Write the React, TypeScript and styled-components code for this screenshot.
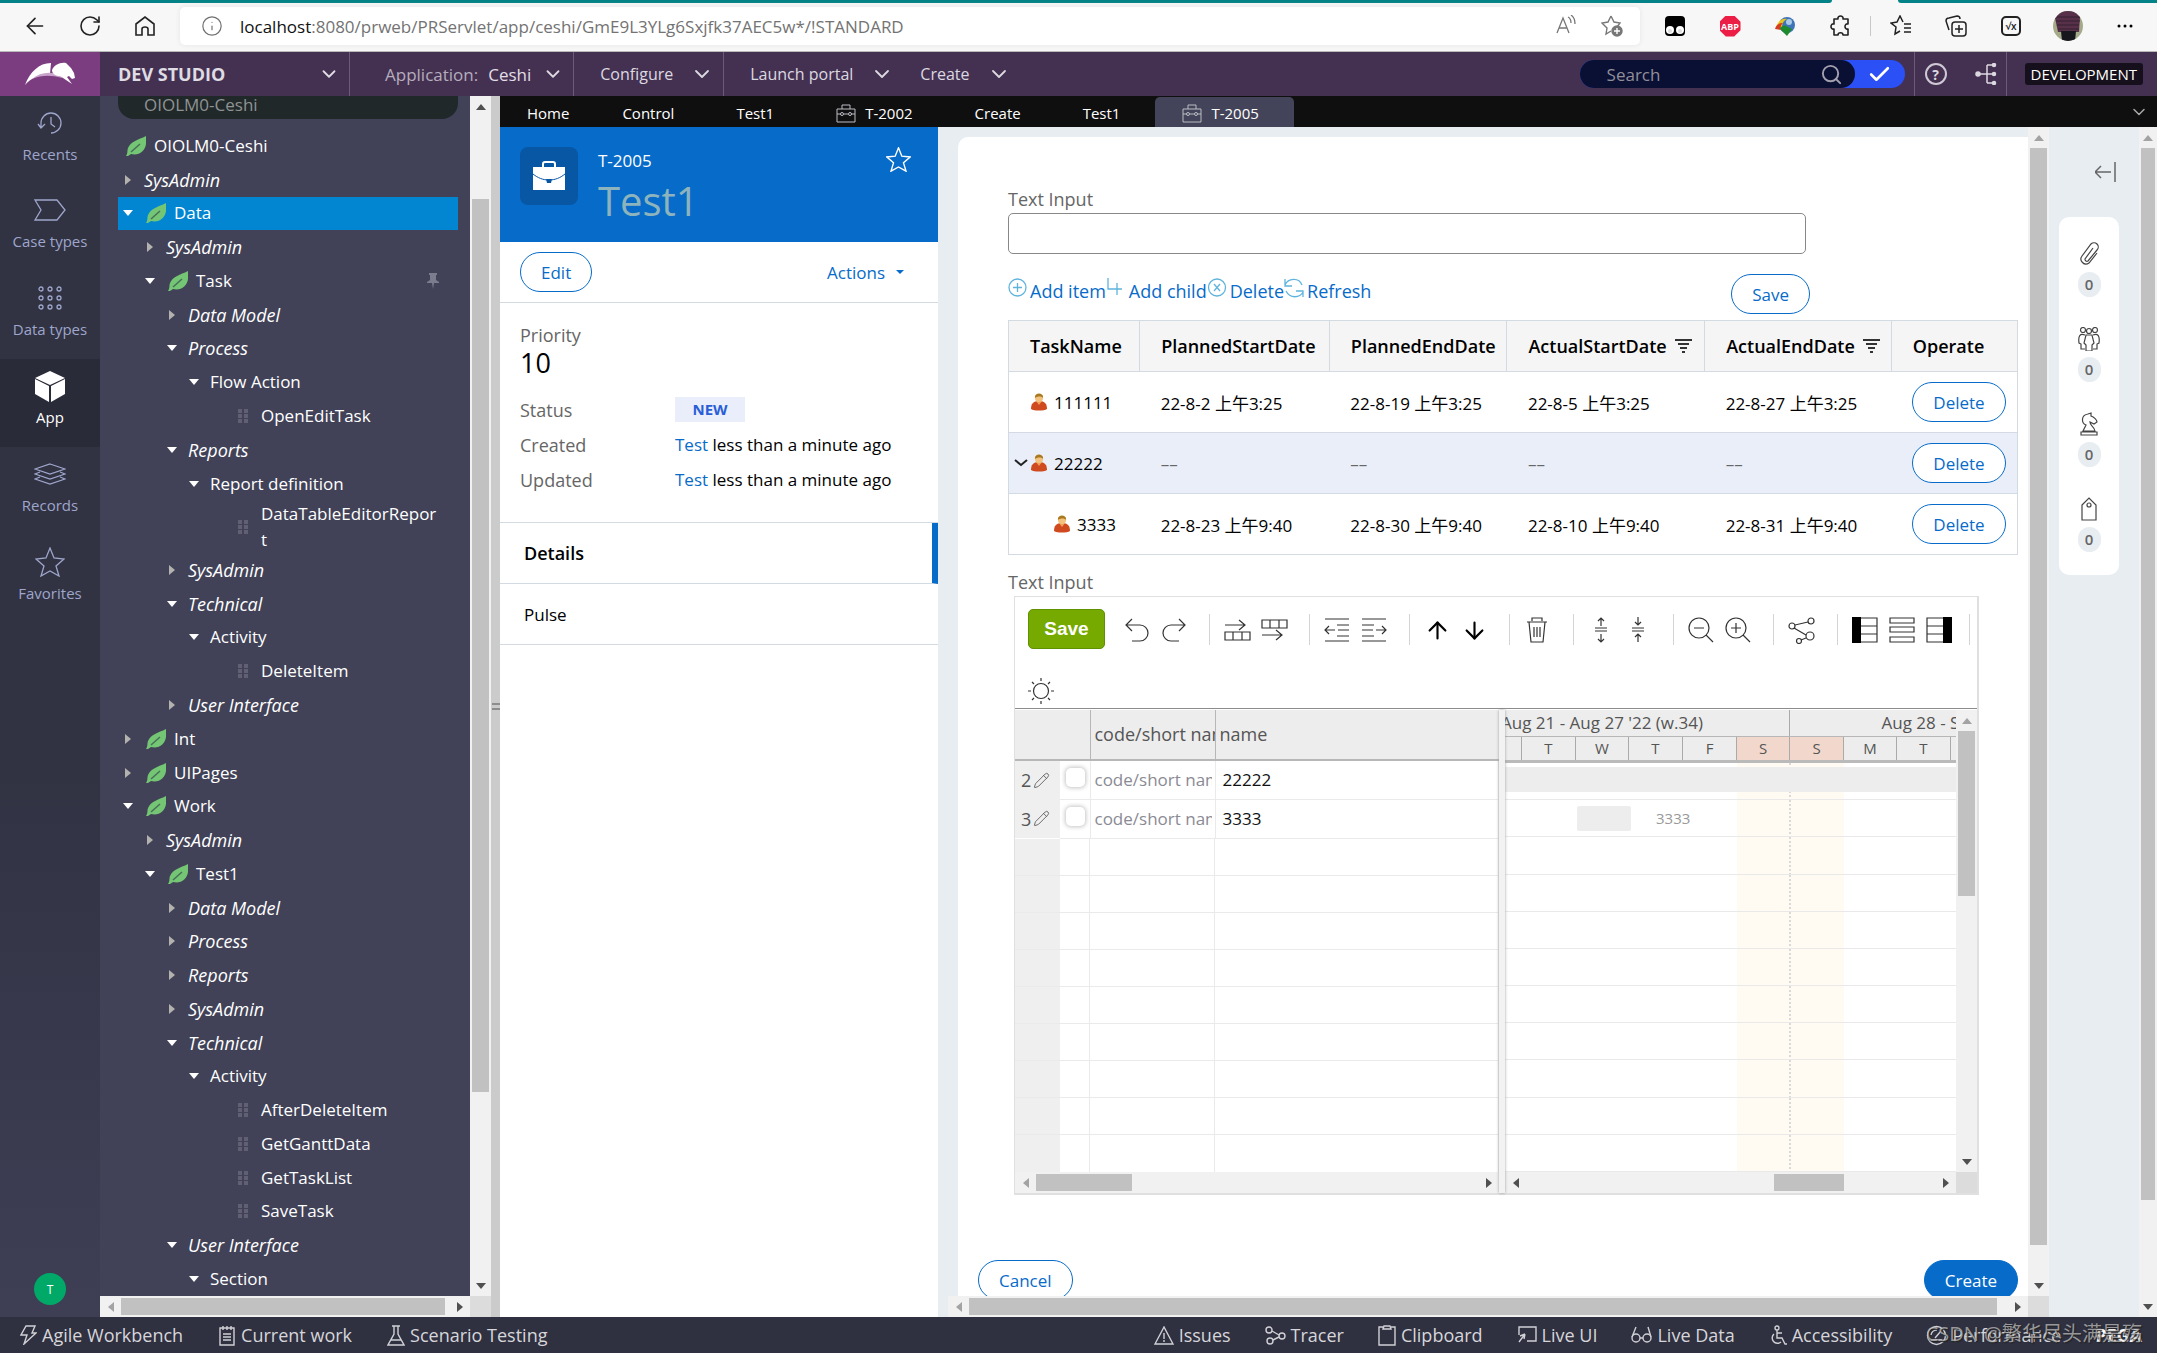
import React from 'react';
import styled, { createGlobalStyle, css } from 'styled-components';
import {
  ArrowLeft, RotateCw, Info, ChevronDown, Search, Check, Pencil, ArrowUp, ArrowDown,
} from 'lucide-react';

const sans = '"Open Sans", "Noto Sans", "Noto Sans CJK SC", sans-serif';

const Global = createGlobalStyle`
  * { box-sizing: border-box; }
  html, body { margin: 0; height: 100%; }
  #root { height: 100%; }
  body { font-family: ${sans}; font-size: 17px; color: #000; overflow: hidden; }
  button, input { font-family: inherit; }
  button { cursor: pointer; padding: 0; border: 0; background: none; color: inherit; font-size: inherit; }
  a { text-decoration: none; color: inherit; }
  svg { display: block; flex: none; }
`;

const Page = styled.div`
  display: flex;
  flex-direction: column;
  height: 100vh;
  overflow: hidden;
`;

/* ---------- scroll bars ---------- */

const BarShell = styled.div<{ $vertical?: boolean; $size: number }>`
  display: flex;
  flex: none;
  flex-direction: ${(p) => (p.$vertical ? 'column' : 'row')};
  ${(p) => (p.$vertical ? `width: ${p.$size}px; padding: 0 2px;` : `height: ${p.$size}px; padding: 2px 0;`)}
  background: #f1f1f1;
`;
const BarEnd = styled.div`
  flex: none;
  width: 21px;
  height: 100%;
  display: flex;
  align-items: center;
  justify-content: center;
  &[data-vertical='true'] { width: 100%; height: 21px; }
`;
const BarSpace = styled.div<{ $grow: number }>`
  flex: ${(p) => p.$grow} 1 0;
`;
const BarThumb = styled(BarSpace)`
  background: #c1c1c1;
`;
const arrowShape = {
  up: '5,0 10,6 0,6',
  down: '0,0 10,0 5,6',
  left: '6,0 6,10 0,5',
  right: '0,0 6,5 0,10',
};
function Arrow({ dir, color = '#505050' }: { dir: keyof typeof arrowShape; color?: string }) {
  const flat = dir === 'up' || dir === 'down';
  return (
    <svg width={flat ? 10 : 6} height={flat ? 6 : 10}>
      <polygon points={arrowShape[dir]} fill={color} />
    </svg>
  );
}
type BarProps = { vertical?: boolean; size?: number; before: number; thumb: number; after: number; startColor?: string };
function ScrollBar({ vertical, size = 21, before, thumb, after, startColor }: BarProps) {
  return (
    <BarShell $vertical={vertical} $size={size} aria-hidden="true">
      <BarEnd data-vertical={!!vertical}><Arrow dir={vertical ? 'up' : 'left'} color={startColor} /></BarEnd>
      <BarSpace $grow={before} />
      <BarThumb $grow={thumb} />
      <BarSpace $grow={after} />
      <BarEnd data-vertical={!!vertical}><Arrow dir={vertical ? 'down' : 'right'} /></BarEnd>
    </BarShell>
  );
}
const BarCorner = styled.div`
  flex: none;
  width: 21px;
  height: 21px;
  background: #dcdcdc;
`;
const BarLine = styled.div`
  display: flex;
  flex: none;
  & > :first-child { flex: 1; }
`;

/* ---------- browser chrome ---------- */

const TabStrip = styled.div`
  flex: none;
  display: flex;
  height: 3px;
  background: #f7f7f7;
`;
const TabStripPart = styled.div<{ $grow: number }>`
  flex: ${(p) => p.$grow} 1 0;
  background: #038387;
  &:first-child { border-bottom-right-radius: 3px; }
  &:last-child { border-bottom-left-radius: 3px; }
`;
const TabStripGap = styled.div`
  width: 66px;
`;
const BrowserBar = styled.div`
  flex: none;
  display: flex;
  align-items: center;
  gap: 20px;
  height: 49px;
  padding: 0 17px 2px 20px;
  background: #f7f7f7;
  border-bottom: 1px solid #b9b9b9;
  color: #222;
`;
const IconSet = styled.div`
  display: flex;
  align-items: center;
  gap: 25px;
`;
const ChromeButton = styled.button`
  display: flex;
  align-items: center;
  justify-content: center;
  width: 30px;
  height: 30px;
`;
const ProfileButton = styled(ChromeButton)`
  margin: 0 2px;
`;
const ChromeDivider = styled.div`
  width: 1px;
  height: 20px;
  margin: 0 -10px;
  background: #c8c8c8;
`;
const AddressBar = styled.div`
  flex: 1;
  display: flex;
  align-items: center;
  gap: 17px;
  height: 38px;
  padding: 0 17px 0 21px;
  border-radius: 5px;
  background: #fff;
  box-shadow: 0 0 5px #e4e4e4;
  color: #707070;
`;
const Url = styled.div`
  flex: 1;
  font-size: 17px;
  color: #737373;
  & > b { font-weight: 400; color: #111; }
`;
const AddressTools = styled.div`
  display: flex;
  gap: 25px;
`;
const AdBlock = styled.span`
  display: flex;
  align-items: center;
  justify-content: center;
  width: 21px;
  height: 21px;
  background: #ed1e45;
  clip-path: polygon(30% 0, 70% 0, 100% 30%, 100% 70%, 70% 100%, 30% 100%, 0 70%, 0 30%);
  color: #fff;
  font-size: 9px;
  font-weight: 700;
`;
const MathBox = styled.span`
  display: flex;
  align-items: center;
  justify-content: center;
  width: 20px;
  height: 20px;
  border: 2px solid #222;
  border-radius: 5px;
  font-size: 10px;
  font-weight: 600;
`;

function BrowserChrome() {
  return (
    <>
      <TabStrip>
        <TabStripPart $grow={1832} />
        <TabStripGap />
        <TabStripPart $grow={259} />
      </TabStrip>
      <BrowserBar>
        <IconSet>
          <ChromeButton aria-label="Back"><ArrowLeft size={26} strokeWidth={1.5} /></ChromeButton>
          <ChromeButton aria-label="Reload"><RotateCw size={24} strokeWidth={1.6} /></ChromeButton>
          <ChromeButton aria-label="Home page">
            <svg width="20" height="20" viewBox="0 0 20 20" fill="none" stroke="#222" strokeWidth="1.6">
              <path d="M1 8 10 1l9 7v11h-6v-6c0-1-1-2-3-2s-3 1-3 2v6H1z" />
            </svg>
          </ChromeButton>
        </IconSet>
        <AddressBar>
          <Info size={22} strokeWidth={1.3} />
          <Url><b>localhost</b>:8080/prweb/PRServlet/app/ceshi/GmE9L3YLg6Sxjfk37AEC5w*/!STANDARD</Url>
          <AddressTools>
            <svg width="20" height="20" viewBox="0 0 20 20" fill="none" stroke="#777" strokeWidth="1.3">
              <path d="M1 18 7 3l6 15M3 13h8M12 2c2 1 3 3 3 6M15 0c3 2 4 5 4 9" />
            </svg>
            <svg width="22" height="22" viewBox="0 0 22 22" fill="none" stroke="#777" strokeWidth="1.4">
              <path d="m10 1 3 6 6 1-3 4M10 1 7 7 1 8l5 5-1 6 5-3" />
              <circle cx="16" cy="16" r="5" fill="#777" />
              <path d="M16 13v6M13 16h6" stroke="#fff" />
            </svg>
          </AddressTools>
        </AddressBar>
        <IconSet>
          <ChromeButton aria-label="Tampermonkey">
            <svg width="20" height="20" viewBox="0 0 20 20">
              <rect width="20" height="20" rx="4" fill="#000" />
              <circle cx="5" cy="14" r="4" fill="#fff" /><circle cx="15" cy="14" r="4" fill="#fff" />
              <circle cx="5" cy="15" r="2" fill="#ddd" /><circle cx="15" cy="15" r="2" fill="#ddd" />
            </svg>
          </ChromeButton>
          <ChromeButton aria-label="Adblock"><AdBlock>ABP</AdBlock></ChromeButton>
          <ChromeButton aria-label="Download manager">
            <svg width="21" height="21" viewBox="0 0 21 21">
              <circle cx="12" cy="9" r="8" fill="#3f74b8" />
              <circle cx="14" cy="6" r="3" fill="#a9cbe8" />
              <path d="M1 11C3 5 7 2 12 3c-4 2-5 5-5 9z" fill="#e8c31c" />
              <path d="M0 13c1-4 4-6 8-6-2 2-3 4-2 7z" fill="#d33b22" />
              <path d="M5 12c2-2 4-3 6-2l6 3-5 7-5-5z" fill="#1e8a2e" />
            </svg>
          </ChromeButton>
          <ChromeButton aria-label="Extensions">
            <svg width="20" height="22" viewBox="0 0 20 22" fill="none" stroke="#222" strokeWidth="1.6">
              <path d="M4 4h4c-1-4 6-4 5 0h5v5c-4-1-4 6 0 5v6h-5c0-3-5-3-5 0H4v-6c-4 1-4-6 0-5z" strokeLinejoin="round" />
            </svg>
          </ChromeButton>
          <ChromeDivider />
          <ChromeButton aria-label="Favorites bar">
            <svg width="22" height="22" viewBox="0 0 22 22" fill="none" stroke="#222" strokeWidth="1.5">
              <path d="m13 7-3-6-3 6-6 1 5 4-1 7 5-3M14 9h7M14 13h7M14 17h7" />
            </svg>
          </ChromeButton>
          <ChromeButton aria-label="Collections">
            <svg width="22" height="22" viewBox="0 0 22 22" fill="none" stroke="#222" strokeWidth="1.5">
              <rect x="7" y="7" width="14" height="14" rx="3" />
              <path d="M14 10v8M10 14h8M4 15 1 6c0-2 1-3 3-3l8-2c2 0 3 1 3 3" />
            </svg>
          </ChromeButton>
          <ChromeButton aria-label="Math solver"><MathBox>√x</MathBox></ChromeButton>
          <ProfileButton aria-label="Profile">
            <svg width="30" height="30" viewBox="0 0 30 30">
              <clipPath id="face"><circle cx="15" cy="15" r="15" /></clipPath>
              <g clipPath="url(#face)">
                <rect width="30" height="30" fill="#a5aa8a" />
                <path d="M8 0h14l5 6-1 15H5L2 7z" fill="#58304a" />
                <path d="M4 6h23M3 10h24M4 14h22M5 18h21" stroke="#34202f" />
                <path d="M8 20h15l-1 10H9z" fill="#17161c" />
              </g>
            </svg>
          </ProfileButton>
          <ChromeButton aria-label="More">
            <svg width="16" height="4"><circle cx="2" cy="2" r="1.5" /><circle cx="8" cy="2" r="1.5" /><circle cx="14" cy="2" r="1.5" /></svg>
          </ChromeButton>
        </IconSet>
      </BrowserBar>
    </>
  );
}

/* ---------- studio header ---------- */

const Header = styled.header`
  flex: none;
  display: flex;
  height: 44px;
  background: #443152;
  color: #dcd8e0;
  font-size: 16px;
`;
const Logo = styled.a`
  width: 100px;
  display: flex;
  align-items: center;
  justify-content: center;
  background: #7c3c80;
`;
const Menu = styled.button<{ $gap: number; $pad: string; $rule?: boolean }>`
  display: flex;
  align-items: center;
  gap: ${(p) => p.$gap}px;
  padding: ${(p) => p.$pad};
  ${(p) => p.$rule && 'border-right: 1px solid #6b5a79;'}
`;
const StudioMenu = styled(Menu)`
  width: 250px;
  justify-content: space-between;
  font-weight: 700;
  font-size: 18px;
  color: #dfdce3;
`;
const MenuLabel = styled.span`
  font-size: 17px;
  color: #b5adbd;
  & > b { margin-left: 10px; font-size: 17px; font-weight: 400; color: #e2dfe6; }
`;
const HeaderRight = styled.div`
  margin-left: auto;
  display: flex;
  align-items: center;
`;
const SearchPill = styled.form`
  display: flex;
  width: 325px;
  height: 28px;
  margin-right: 9px;
  border-radius: 14px;
  background: #2b50f5;
`;
const SearchField = styled.label`
  display: flex;
  align-items: center;
  width: 275px;
  padding: 0 12px 0 27px;
  border-radius: 14px;
  background: #0a1033;
  color: #a39fae;
`;
const SearchInput = styled.input`
  flex: 1;
  min-width: 0;
  padding: 0;
  border: 0;
  outline: 0;
  background: none;
  color: #fff;
  font-size: 17px;
  &::placeholder { color: #918f9b; opacity: 1; }
`;
const SearchGo = styled.button`
  flex: 1;
  display: flex;
  align-items: center;
  justify-content: center;
  color: #fff;
`;
const HeaderTools = styled.div`
  display: flex;
  align-items: center;
  gap: 28px;
  height: 44px;
  padding: 0 9px 0 10px;
  border: solid #6b5a79;
  border-width: 0 1px;
`;
const EnvBadge = styled.span`
  margin: 0 14px 0 18px;
  padding: 0 6px;
  border-radius: 3px;
  background: #15101b;
  color: #fff;
  font-size: 15px;
  line-height: 22px;
`;
const HelpMark = styled.button`
  width: 22px;
  height: 22px;
  border: 2px solid #cfc9d5;
  border-radius: 50%;
  font-size: 14px;
  font-weight: 700;
  line-height: 17px;
`;

function StudioHeader() {
  return (
    <Header>
      <Logo href="#home" aria-label="Pega">
        <svg width="52" height="24" viewBox="0 0 52 24">
          <path d="M1 23C6 10 15 1 27 1l-1 11C16 12 7 16 1 23z" fill="#fff" />
          <path d="M8 17c8-7 18-8 29-4l1 3c-11-3-20-3-30 1z" fill="#c9a3cb" />
          <path d="M28 8c2-5 8-8 14-7l5 5 3 5 1 5-3 1-3-3-2 1 5 7-6-4-6-4c-4 0-8-2-8-6z" fill="#fff" />
        </svg>
      </Logo>
      <StudioMenu $gap={10} $pad="0 9px 0 18px" $rule>DEV STUDIO<ChevronDown size={22} strokeWidth={2} /></StudioMenu>
      <Menu $gap={11} $pad="0 9px 0 35px" $rule>
        <MenuLabel>Application:<b>Ceshi</b></MenuLabel><ChevronDown size={22} />
      </Menu>
      <Menu $gap={17} $pad="0 9px 0 26px" $rule>Configure<ChevronDown size={24} strokeWidth={1.8} /></Menu>
      <Menu $gap={17} $pad="0 0 0 26px">Launch portal<ChevronDown size={24} strokeWidth={1.8} /></Menu>
      <Menu $gap={17} $pad="0 0 0 26px">Create<ChevronDown size={24} strokeWidth={1.8} /></Menu>
      <HeaderRight>
        <SearchPill>
          <SearchField>
            <SearchInput placeholder="Search" aria-label="Search" />
            <Search size={23} />
          </SearchField>
          <SearchGo type="button" aria-label="Run search"><Check size={25} strokeWidth={2.5} /></SearchGo>
        </SearchPill>
        <HeaderTools>
          <HelpMark>?</HelpMark>
          <svg width="22" height="22" viewBox="0 0 22 22" fill="#dcd8e0" stroke="#dcd8e0" strokeWidth="1.5">
            <path d="M3 11h16M12 2h7M12 20h7M12 2v18" fill="none" />
            <circle cx="3" cy="11" r="2" /><circle cx="19" cy="2" r="1.5" /><circle cx="19" cy="11" r="1.5" /><circle cx="19" cy="20" r="1.5" />
          </svg>
        </HeaderTools>
        <EnvBadge>DEVELOPMENT</EnvBadge>
      </HeaderRight>
    </Header>
  );
}

/* ---------- left rail ---------- */

const Body = styled.div`
  flex: 1;
  min-height: 0;
  display: flex;
`;
const Rail = styled.nav`
  flex: none;
  display: flex;
  flex-direction: column;
  width: 100px;
  background: linear-gradient(#313242 55%, #3e3f55);
`;
const RailItem = styled.a<{ $active?: boolean }>`
  display: flex;
  flex-direction: column;
  align-items: center;
  gap: 4px;
  height: 88px;
  padding-top: 10px;
  color: ${(p) => (p.$active ? '#fff' : '#9ea6cb')};
  font-size: 15px;
  line-height: 22px;
  ${(p) => p.$active && 'background: #2a2b38;'}
  &:first-child { height: 87px; }
`;
const RailIcon = styled.span`
  display: flex;
  align-items: center;
  height: 33px;
`;
const Avatar = styled.button`
  width: 32px;
  height: 32px;
  margin: auto auto 12px;
  border-radius: 50%;
  background: #00a968;
  color: #fff;
  font-size: 12px;
`;

const railStroke = { fill: 'none', stroke: '#9ea6cb', strokeWidth: 1.3 };
const railItems = [
  {
    label: 'Recents',
    icon: (
      <svg width="26" height="22" viewBox="0 0 26 22" {...railStroke}>
        <path d="M4 15V11a10 10 0 1 1 10 10M1 12l3 4 4-4M14 5v7l4 3" />
      </svg>
    ),
  },
  {
    label: 'Case types',
    icon: <svg width="32" height="22" viewBox="0 0 32 22" {...railStroke}><path d="M1 1h22l8 10-8 10H1l6-10z" /></svg>,
  },
  {
    label: 'Data types',
    icon: (
      <svg width="24" height="24" viewBox="0 0 24 24" {...railStroke}>
        {[3, 12, 21].map((y) => [3, 12, 21].map((x) => <circle key={`${x}-${y}`} cx={x} cy={y} r="2" />))}
      </svg>
    ),
  },
  {
    label: 'App',
    active: true,
    icon: (
      <svg width="32" height="32" viewBox="0 0 32 32">
        <path d="M16 1 31 8 16 15 1 8zM1 9l14 7v16L1 24zM31 9l-14 7v16l14-8z" fill="#fff" />
      </svg>
    ),
  },
  {
    label: 'Records',
    icon: (
      <svg width="32" height="22" viewBox="0 0 32 22" {...railStroke}>
        <path d="M16 1 31 6l-15 5L1 6zM6 9l-5 2 15 5 15-5-5-2M6 14l-5 2 15 5 15-5-5-2" />
      </svg>
    ),
  },
  {
    label: 'Favorites',
    icon: (
      <svg width="30" height="30" viewBox="0 0 30 30" {...railStroke}>
        <path d="m15 1 4 10 10 1-8 7 3 10-9-5-9 5 3-10-8-7 10-1z" />
      </svg>
    ),
  },
];

function LeftRail() {
  return (
    <Rail>
      {railItems.map((r) => (
        <RailItem key={r.label} href="#rail" $active={r.active}>
          <RailIcon>{r.icon}</RailIcon>
          {r.label}
        </RailItem>
      ))}
      <Avatar>T</Avatar>
    </Rail>
  );
}

/* ---------- app explorer tree ---------- */

const Explorer = styled.div`
  flex: none;
  display: flex;
  flex-direction: column;
  width: 391px;
`;
const ExplorerMain = styled.div`
  flex: 1;
  min-height: 0;
  display: flex;
`;
const TreePane = styled.div`
  flex: 1;
  display: flex;
  flex-direction: column;
  gap: 10px;
  min-height: 0;
  padding: 0 12px 0 18px;
  background: #414257;
  color: #fff;
  overflow: hidden;
`;
const TreeSearch = styled.input`
  flex: none;
  height: 23px;
  padding: 0 26px 6px;
  border: 0;
  border-radius: 0 0 16px 16px;
  background: #212829;
  color: #8f9393;
  font-size: 17px;
`;
const Tree = styled.ul`
  flex: 1;
  min-height: 0;
  display: flex;
  flex-direction: column;
  margin: 0;
  padding: 0;
  list-style: none;
`;
const TreeRow = styled.li<{ $pad: number; $selected?: boolean; $italic?: boolean; $tall?: boolean }>`
  flex: 0 1 ${(p) => (p.$tall ? 53 : 34)}px;
  min-height: 0;
  display: flex;
  align-items: center;
  padding-left: ${(p) => p.$pad}px;
  font-size: ${(p) => (p.$italic ? 18 : 17)}px;
  line-height: 26px;
  ${(p) => p.$italic && 'font-style: italic;'}
  ${(p) => p.$selected && 'background: #0286d2;'}
`;
const Twisty = styled.span`
  flex: none;
  display: flex;
  justify-content: center;
  width: 20px;
  margin-right: 6px;
`;
const LeafMark = styled.svg`
  margin: 0 8px 0 2px;
`;
const Grip = styled.svg`
  margin-right: 13px;
`;
const NodeName = styled.span`
  word-break: break-all;
  flex: 1;
  padding-right: 18px;
`;
const Pin = styled.svg`
  margin-right: 19px;
`;
const Splitter = styled.div`
  flex: none;
  display: flex;
  align-items: center;
  justify-content: center;
  width: 9px;
  background: #cbcbcb;
`;

type Node = { t: string; lv: number; k?: 'o' | 'c' | 'i'; leaf?: boolean; it?: boolean; sel?: boolean; tall?: boolean; pin?: boolean; root?: boolean };
const nodes: Node[] = [
  { t: 'OIOLM0-Ceshi', lv: 0, root: true, leaf: true },
  { t: 'SysAdmin', lv: 0, k: 'c', it: true },
  { t: 'Data', lv: 0, k: 'o', leaf: true, sel: true },
  { t: 'SysAdmin', lv: 1, k: 'c', it: true },
  { t: 'Task', lv: 1, k: 'o', leaf: true, pin: true },
  { t: 'Data Model', lv: 2, k: 'c', it: true },
  { t: 'Process', lv: 2, k: 'o', it: true },
  { t: 'Flow Action', lv: 3, k: 'o' },
  { t: 'OpenEditTask', lv: 4, k: 'i' },
  { t: 'Reports', lv: 2, k: 'o', it: true },
  { t: 'Report definition', lv: 3, k: 'o' },
  { t: 'DataTableEditorReport', lv: 4, k: 'i', tall: true },
  { t: 'SysAdmin', lv: 2, k: 'c', it: true },
  { t: 'Technical', lv: 2, k: 'o', it: true },
  { t: 'Activity', lv: 3, k: 'o' },
  { t: 'DeleteItem', lv: 4, k: 'i' },
  { t: 'User Interface', lv: 2, k: 'c', it: true },
  { t: 'Int', lv: 0, k: 'c', leaf: true },
  { t: 'UIPages', lv: 0, k: 'c', leaf: true },
  { t: 'Work', lv: 0, k: 'o', leaf: true },
  { t: 'SysAdmin', lv: 1, k: 'c', it: true },
  { t: 'Test1', lv: 1, k: 'o', leaf: true },
  { t: 'Data Model', lv: 2, k: 'c', it: true },
  { t: 'Process', lv: 2, k: 'c', it: true },
  { t: 'Reports', lv: 2, k: 'c', it: true },
  { t: 'SysAdmin', lv: 2, k: 'c', it: true },
  { t: 'Technical', lv: 2, k: 'o', it: true },
  { t: 'Activity', lv: 3, k: 'o' },
  { t: 'AfterDeleteItem', lv: 4, k: 'i' },
  { t: 'GetGanttData', lv: 4, k: 'i' },
  { t: 'GetTaskList', lv: 4, k: 'i' },
  { t: 'SaveTask', lv: 4, k: 'i' },
  { t: 'User Interface', lv: 2, k: 'o', it: true },
  { t: 'Section', lv: 3, k: 'o' },
];
const padOf = (n: Node) => (n.root ? 6 : n.k === 'i' ? 120 : n.lv * 22);

function ExplorerTree() {
  return (
    <Explorer>
      <ExplorerMain>
        <TreePane>
          <TreeSearch defaultValue="OIOLM0-Ceshi" aria-label="Application class" />
          <Tree>
            {nodes.map((n, i) => (
              <TreeRow key={i} $pad={padOf(n)} $selected={n.sel} $italic={n.it} $tall={n.tall}>
                {n.k === 'o' && <Twisty><Arrow dir="down" color="#fff" /></Twisty>}
                {n.k === 'c' && <Twisty><Arrow dir="right" color="#b3b2af" /></Twisty>}
                {n.k === 'i' && (
                  <Grip width="10" height="14">
                    {[0, 5, 10].map((y) => [0, 6].map((x) => <rect key={`${x}-${y}`} x={x} y={y} width="4" height="4" fill="#606072" />))}
                  </Grip>
                )}
                {n.leaf && (
                  <LeafMark width="20" height="20" viewBox="0 0 20 20">
                    <path d="M20 0v8c-1 7-7 12-15 10l-3 2H0c2-3 1-5 2-8C5 5 12 4 20 0z" fill="#74c674" />
                    <path d="M5 16 14 8" stroke="#46705a" strokeWidth="1.5" />
                  </LeafMark>
                )}
                <NodeName>{n.t}</NodeName>
                {n.pin && (
                  <Pin width="12" height="16" viewBox="0 0 12 16">
                    <path d="M2 0h8v2H9v5l3 2v1H0V9l3-2V2H2zM5 10h2l-1 6z" fill="#7b7c8e" />
                  </Pin>
                )}
              </TreeRow>
            ))}
          </Tree>
        </TreePane>
        <ScrollBar vertical before={82} thumb={894} after={183} />
      </ExplorerMain>
      <BarLine>
        <ScrollBar before={0} thumb={324} after={4} startColor="#a3a3a3" />
        <BarCorner />
      </BarLine>
    </Explorer>
  );
}

/* ---------- workspace tabs ---------- */

const Workspace = styled.div`
  flex: 1;
  min-width: 0;
  display: flex;
  flex-direction: column;
`;
const Tabs = styled.div`
  flex: none;
  display: flex;
  height: 31px;
  padding-top: 1px;
  background: #0f0f10;
  color: #fff;
`;
const Tab = styled.button<{ $active?: boolean; $short?: boolean }>`
  display: flex;
  align-items: center;
  gap: 8px;
  padding: 2px ${(p) => (p.$short ? 26 : 35)}px 0 27px;
  border-radius: 5px 5px 0 0;
  font-size: 15px;
  ${(p) => p.$active && 'background: #434459;'}
`;
const TabsMenu = styled.button`
  margin-left: auto;
  padding: 0 8px;
  color: #a9a9a9;
`;
function CaseIcon() {
  return (
    <svg width="21" height="19" viewBox="0 0 21 19" fill="none" stroke="#bcbcc4" strokeWidth="1">
      <path d="M1 5h18v13H1zM6 5V1h8v4M1 10h4M8 10h4M15 10h4" />
      <circle cx="6" cy="10" r="1.5" /><circle cx="14" cy="10" r="1.5" />
    </svg>
  );
}
const tabItems = [
  { t: 'Home', short: true }, { t: 'Control' }, { t: 'Test1' }, { t: 'T-2002', icon: true }, { t: 'Create' }, { t: 'Test1' },
  { t: 'T-2005', icon: true, active: true },
];

/* ---------- case summary ---------- */

const line = '#d3dae2';
const WorkArea = styled.div`
  flex: 1;
  min-height: 0;
  display: flex;
  background: #e8edf1;
`;
const Summary = styled.section`
  flex: none;
  width: 438px;
  background: #fff;
  font-size: 17px;
`;
const SummaryHead = styled.div`
  display: flex;
  gap: 20px;
  height: 115px;
  padding: 20px 27px 0 20px;
  background: #076bc9;
  color: #fff;
`;
const CaseBadge = styled.div`
  display: flex;
  align-items: center;
  justify-content: center;
  width: 58px;
  height: 58px;
  border-radius: 8px;
  background: #0757a4;
`;
const CaseTitle = styled.div`
  flex: 1;
  font-size: 17px;
  line-height: 27px;
`;
const CaseName = styled.h1`
  margin: 0;
  color: #8db4bd;
  font-size: 40px;
  font-weight: 400;
  line-height: 54px;
`;
const SummaryActions = styled.div`
  display: flex;
  align-items: center;
  justify-content: space-between;
  height: 61px;
  padding: 0 34px 0 20px;
  border-bottom: 1px solid ${line};
  color: #076bc9;
`;
const Pill = styled.button<{ $solid?: boolean }>`
  height: 40px;
  padding: 0 20px;
  border: 1px solid #076bc9;
  border-radius: 20px;
  background: ${(p) => (p.$solid ? '#076bc9' : '#fff')};
  color: ${(p) => (p.$solid ? '#fff' : '#076bc9')};
  font-size: 17px;
`;
const ActionsMenu = styled.button`
  display: flex;
  align-items: center;
  gap: 11px;
  font-size: 17px;
`;
const Facts = styled.dl`
  display: grid;
  grid-template-columns: 155px 1fr;
  grid-auto-rows: 35px;
  align-items: center;
  margin: 0;
  padding: 19px 20px 25px;
  border-bottom: 1px solid ${line};
  & > dt { color: #666; font-size: 18px; }
  & > dd { margin: 0; }
`;
const Priority = styled.div`
  grid-column: 1 / -1;
  grid-row: span 2;
  align-self: start;
  color: #666;
  font-size: 18px;
  line-height: 27px;
  & > strong { display: block; color: #000; font-size: 27px; font-weight: 400; line-height: 28px; }
`;
const StatusTag = styled.span`
  display: block;
  width: 70px;
  background: #e9eefa;
  color: #295ed6;
  font-size: 15px;
  font-weight: 700;
  line-height: 25px;
  text-align: center;
`;
const BlueLink = styled.a`
  color: #076bc9;
`;
const SideTab = styled.a<{ $active?: boolean }>`
  display: flex;
  align-items: center;
  height: 61px;
  padding-left: 24px;
  border-bottom: 1px solid ${line};
  ${(p) => p.$active && css`border-right: 6px solid #076bc9; font-size: 18px; font-weight: 600;`}
`;

function CaseSummary() {
  return (
    <Summary>
      <SummaryHead>
        <CaseBadge>
          <svg width="32" height="30" viewBox="0 0 32 30">
            <path d="M10 6V3c0-1 1-2 2-2h8c1 0 2 1 2 2v3" fill="none" stroke="#fff" strokeWidth="2" />
            <path d="M0 6h32v23H0z" fill="#fff" />
            <path d="M0 13c5 4 10 6 16 6s11-2 16-6" fill="none" stroke="#0757a4" />
            <path d="M13 18h6l-1 4h-4z" fill="#0757a4" />
          </svg>
        </CaseBadge>
        <CaseTitle>
          T-2005
          <CaseName>Test1</CaseName>
        </CaseTitle>
        <svg width="25" height="25" viewBox="0 0 30 30" fill="none" stroke="#fff" strokeWidth="1.7">
          <path d="m15 1 4 10 10 1-8 7 3 10-9-5-9 5 3-10-8-7 10-1z" />
        </svg>
      </SummaryHead>
      <SummaryActions>
        <Pill>Edit</Pill>
        <ActionsMenu>Actions<svg width="8" height="4"><path d="M0 0h8L4 4z" fill="#076bc9" /></svg></ActionsMenu>
      </SummaryActions>
      <Facts>
        <Priority>Priority<strong>10</strong></Priority>
        <dt>Status</dt><dd><StatusTag>NEW</StatusTag></dd>
        <dt>Created</dt><dd><BlueLink href="#op">Test</BlueLink> less than a minute ago</dd>
        <dt>Updated</dt><dd><BlueLink href="#op">Test</BlueLink> less than a minute ago</dd>
      </Facts>
      <SideTab href="#details" $active>Details</SideTab>
      <SideTab href="#pulse">Pulse</SideTab>
    </Summary>
  );
}

/* ---------- form ---------- */

const FormColumn = styled.main`
  flex: 1;
  min-width: 0;
  display: flex;
  flex-direction: column;
  padding-left: 10px;
`;
const FormMain = styled.div`
  flex: 1;
  min-height: 0;
  display: flex;
`;
const FormView = styled.div`
  flex: 1;
  min-width: 0;
  padding: 10px 0 0 10px;
  overflow: hidden;
`;
const Card = styled.div`
  min-height: 100%;
  border-top-left-radius: 10px;
  background: #fff;
`;
const FormBody = styled.div`
  display: flex;
  flex-direction: column;
  padding: 50px 10px 0 50px;
`;
const FieldLabel = styled.label`
  color: #666;
  font-size: 18px;
  line-height: 25px;
`;
const GanttCaption = styled.h2`
  margin: 15px 0 1px;
  color: #666;
  font-size: 18px;
  font-weight: 400;
  line-height: 25px;
`;
const TextBox = styled.input`
  align-self: flex-start;
  width: 79%;
  height: 41px;
  margin-top: 1px;
  border: 1px solid #888;
  border-radius: 5px;
  background: #fff;
  font-size: 17px;
`;
const RowActions = styled.div`
  display: flex;
  align-items: center;
  margin: 20px 0 6px;
  padding-right: 208px;
  & > :last-child { margin-left: auto; }
`;
const RowLink = styled.a`
  display: flex;
  gap: 3px;
  padding-bottom: 6px;
  color: #076bc9;
  font-size: 18px;
  & > svg { margin-top: -1px; }
`;
const DataTable = styled.table`
  width: 100%;
  table-layout: fixed;
  border-collapse: collapse;
  border: 1px solid ${line};
`;
const HeadCell = styled.th`
  height: 51px;
  padding: 0 0 0 21px;
  border: 1px solid ${line};
  background: #f5f5f5;
  text-align: left;
  font-size: 18px;
  font-weight: 600;
  white-space: nowrap;
  & > svg { display: inline-block; margin-left: 8px; }
`;
const BodyRow = styled.tr<{ $selected?: boolean }>`
  height: 61px;
  border-bottom: 1px solid ${line};
  ${(p) => p.$selected && 'background: #e9eef9;'}
`;
const Cell = styled.td`
  padding: 0 0 0 21px;
  white-space: nowrap;
`;
const Muted = styled.span`
  color: #666;
`;
const NameCell = styled.td`
  padding: 0;
`;
const NameLine = styled.div<{ $child?: boolean }>`
  display: flex;
  align-items: center;
  padding-left: ${(p) => (p.$child ? 28 : 5)}px;
  gap: 7px;
`;
const RowTwisty = styled.span`
  width: 14px;
  margin-right: -4px;
`;

const tableRows = [
  { name: '111111', dates: ['22-8-2 上午3:25', '22-8-19 上午3:25', '22-8-5 上午3:25', '22-8-27 上午3:25'] },
  { name: '22222', open: true, dates: ['––', '––', '––', '––'] },
  { name: '3333', child: true, dates: ['22-8-23 上午9:40', '22-8-30 上午9:40', '22-8-10 上午9:40', '22-8-31 上午9:40'] },
];
const columns = [
  { t: 'TaskName', w: '13%' }, { t: 'PlannedStartDate', w: '18.8%' }, { t: 'PlannedEndDate', w: '17.6%' },
  { t: 'ActualStartDate', w: '19.6%', filter: true }, { t: 'ActualEndDate', w: '18.5%', filter: true }, { t: 'Operate', w: '12.5%' },
];
const linkStroke = { fill: 'none', stroke: '#5fb4dd', strokeWidth: 1.3 };

function TaskTable() {
  return (
    <>
      <RowActions>
        <RowLink href="#add">
          <svg width="19" height="19" viewBox="0 0 19 19" {...linkStroke}><circle cx="9.5" cy="9.5" r="8.5" /><path d="M9.5 5v9M5 9.5h9" /></svg>
          Add item
        </RowLink>
        <RowLink href="#child">
          <svg width="20" height="19" viewBox="0 0 20 19" {...linkStroke}><path d="M2 0v11h3M11 5v12M5 11h11" /></svg>
          Add child
        </RowLink>
        <RowLink href="#delete">
          <svg width="20" height="19" viewBox="0 0 20 19" {...linkStroke}><circle cx="10" cy="9.5" r="8.5" /><path d="m7 6 6 7M13 6l-6 7" /></svg>
          Delete
        </RowLink>
        <RowLink href="#refresh">
          <svg width="20" height="20" viewBox="0 0 20 20" {...linkStroke}><path d="M1 1v7h7M1 7c3-7 14-8 17 0M19 19v-6h-7M19 14c-3 6-13 7-17-1" /></svg>
          Refresh
        </RowLink>
        <Pill>Save</Pill>
      </RowActions>
      <DataTable>
        <colgroup>{columns.map((c) => <col key={c.t} style={{ width: c.w }} />)}</colgroup>
        <thead>
          <tr>
            {columns.map((c) => (
              <HeadCell key={c.t}>
                {c.t}
                {c.filter && <svg width="17" height="14" stroke="#333" strokeWidth="2"><path d="M0 1h17M3 5h11M5 9h7M7 13h3" /></svg>}
              </HeadCell>
            ))}
          </tr>
        </thead>
        <tbody>
          {tableRows.map((r) => (
            <BodyRow key={r.name} $selected={r.open}>
              <NameCell>
                <NameLine $child={r.child}>
                  <RowTwisty>{r.open && <svg width="14" height="8" fill="none" stroke="#222" strokeWidth="2"><path d="m1 1 6 5 6-5" /></svg>}</RowTwisty>
                  <svg width="16" height="18" viewBox="0 0 16 18">
                    <path d="M0 16c0-5 2-8 8-8s8 3 8 8c-3 2-13 2-16 0z" fill="#cf4a1e" />
                    <path d="M5 8h6l-3 4z" fill="#f3a05c" />
                    <circle cx="8" cy="5" r="4" fill="#f3c27e" />
                    <path d="M4 5c-1-6 9-6 8 0-1-2-6-2-8 0z" fill="#a9791f" />
                  </svg>
                  {r.name}
                </NameLine>
              </NameCell>
              {r.dates.map((d, i) => <Cell key={i}>{r.open ? <Muted>{d}</Muted> : d}</Cell>)}
              <Cell><Pill>Delete</Pill></Cell>
            </BodyRow>
          ))}
        </tbody>
      </DataTable>
    </>
  );
}

/* ---------- gantt editor ---------- */

const Gantt = styled.section`
  margin: 0 39px 0 6px;
  border: 1px solid #e0e0e0;
  border-width: 1px 2px 2px 1px;
  color: #555;
`;
const GanttTools = styled.div`
  display: flex;
  flex-wrap: wrap;
  align-items: center;
  row-gap: 26px;
  padding: 12px 4px 3px 13px;
  border-bottom: 1px solid #8c8c8c;
  color: #333;
`;
const SaveGreen = styled.button`
  width: 77px;
  height: 40px;
  margin-right: 5px;
  border: 1px solid #5f9100;
  border-radius: 5px;
  background: #76aa00;
  color: #fff;
  font-family: "Liberation Sans", Arial, sans-serif;
  font-size: 19px;
  font-weight: 700;
`;
const ToolGroup = styled.div<{ $end: number }>`
  display: flex;
  align-items: center;
  gap: 11px;
  height: 31px;
  padding: 0 ${(p) => p.$end}px 0 14px;
  border-right: 1px solid #d4d4d4;
`;
const Tool = styled.button`
  display: flex;
  align-items: center;
  justify-content: center;
  width: 26px;
  height: 30px;
  padding-top: 2px;
`;
const k = { fill: 'none', stroke: '#333', strokeWidth: 1.2 };
const toolGroups: [string, React.ReactNode][][] = [
  [
    ['Undo', <svg width="24" height="24" viewBox="0 0 24 24" {...k}><path d="M7 1 1 7l6 6M1 7h14a8 8 0 0 1 0 16H7" /></svg>],
    ['Redo', <svg width="24" height="24" viewBox="0 0 24 24" {...k}><path d="m17 1 6 6-6 6M23 7H9a8 8 0 0 0 0 16h8" /></svg>],
  ],
  [
    ['Insert above', <svg width="27" height="22" viewBox="0 0 27 22" {...k}><path d="M1 6h20M15 1l6 5-6 5M1 13h25v8H1zM9 13v8M18 13v8" /></svg>],
    ['Insert below', <svg width="27" height="22" viewBox="0 0 27 22" {...k}><path d="M1 1h25v8H1zM9 1v8M18 1v8M1 16h20M15 11l6 5-6 5" /></svg>],
  ],
  [
    ['Outdent', <svg width="26" height="24" viewBox="0 0 26 24" {...k}><path d="M1 1h24M1 23h24M13 7h12M1 12h10M14 12h11M13 18h12M5 8l-4 4 4 4" /></svg>],
    ['Indent', <svg width="26" height="24" viewBox="0 0 26 24" {...k}><path d="M1 1h24M1 23h24M1 7h12M1 12h11M15 12h10M1 18h12M21 8l4 4-4 4" /></svg>],
  ],
  [
    ['Move up', <ArrowUp size={27} strokeWidth={1.9} color="#000" />],
    ['Move down', <ArrowDown size={27} strokeWidth={1.9} color="#000" />],
  ],
  [['Delete', <svg width="22" height="26" viewBox="0 0 22 26" {...k}><path d="M1 5h20M3 5l2 20h12l2-20M6 4V1h10v3M8 10v10M11 10v10M14 10v10" /></svg>]],
  [
    ['Expand', <svg width="12" height="26" viewBox="0 0 12 26" {...k}><path d="M0 11h12M0 14h12M6 9V1M3 4l3-3 3 3M6 17v8M3 22l3 3 3-3" /></svg>],
    ['Collapse', <svg width="12" height="26" viewBox="0 0 12 26" {...k}><path d="M0 11h12M0 14h12M6 0v8M3 5l3 3 3-3M6 25v-8M3 20l3-3 3 3" /></svg>],
  ],
  [
    ['Zoom out', <svg width="26" height="26" viewBox="0 0 26 26" {...k}><circle cx="11" cy="11" r="10" /><path d="m18 18 7 7M6 11h10" /></svg>],
    ['Zoom in', <svg width="26" height="26" viewBox="0 0 26 26" {...k}><circle cx="11" cy="11" r="10" /><path d="m18 18 7 7M6 11h10M11 6v10" /></svg>],
  ],
  [['Links', (
    <svg width="27" height="27" viewBox="0 0 27 27" {...k}>
      <circle cx="4" cy="9" r="3" /><circle cx="23" cy="4" r="3" /><circle cx="22" cy="19" r="4" /><circle cx="11" cy="24" r="2.5" />
      <path d="m7 8 13-3M6 11l12 7M13 23l5-2" />
    </svg>
  )]],
  [
    ['Left pane', <svg width="26" height="26" viewBox="0 0 26 26" {...k}><path d="M1 1h24v24H1zM9 9h16M9 17h16" /><path d="M0 0h9v26H0z" fill="#000" stroke="none" /></svg>],
    ['Both panes', <svg width="26" height="26" viewBox="0 0 26 26" {...k}><path d="M1 1h24v5H1zM1 10h24v5H1zM1 20h24v5H1z" /></svg>],
    ['Right pane', <svg width="26" height="26" viewBox="0 0 26 26" {...k}><path d="M1 1h24v24H1zM1 9h16M1 17h16" /><path d="M17 0h9v26h-9z" fill="#000" stroke="none" /></svg>],
  ],
];
const groupEnd = (g: unknown[]) => (g.length === 1 ? 23 : g.length === 3 ? 17 : 22);
const GanttPanes = styled.div`
  display: flex;
  height: 484px;
  padding-top: 1px;
`;
const GridPane = styled.div`
  flex: 484 1 0;
  min-width: 0;
  display: flex;
  flex-direction: column;
`;
const GridTable = styled.table`
  width: 100%;
  table-layout: fixed;
  border-collapse: collapse;
  color: #555;
  & th {
    height: 50px;
    padding: 0 0 0 4px;
    border-bottom: 2px solid #b7b7b7;
    background: #ededed;
    font-weight: 400;
    text-align: left;
    white-space: nowrap;
  }
  & th + th { border-left: 1px solid #b7b7b7; }
  & td {
    height: 39px;
    padding: 0 3px 0 4px;
    border-bottom: 1px solid #eaeaea;
    border-right: 1px solid #eaeaea;
    white-space: nowrap;
    overflow: hidden;
  }
  & td:first-child { background: #efefef; border: 0; padding-left: 6px; }
`;
const RowNumber = styled.span`
  display: flex;
  align-items: center;
  gap: 2px;
  font-size: 18px;
`;
const Tick = styled.input`
  display: block;
  appearance: none;
  width: 19px;
  height: 19px;
  margin: -5px 0 0 2px;
  border-radius: 5px;
  background: #fff;
  box-shadow: 0 0 4px 1px #c4c4c4;
`;
const Clip = styled.div<{ $faint?: boolean }>`
  overflow: hidden;
  font-size: 18px;
  line-height: 25px;
  ${(p) => p.$faint && 'color: #8a8a94; font-size: 17px;'}
`;
const TaskTitle = styled.div`
  padding-left: 3px;
  color: #111;
`;
const EmptyRows = styled.div`
  flex: 1;
  min-height: 0;
  display: grid;
  grid-auto-rows: 1fr;
`;
const EmptyRow = styled.div`
  display: grid;
  grid-template-columns: 45px 30px 125px 1fr;
  border-bottom: 1px solid #eaeaea;
  & > span + span { border-right: 1px solid #eaeaea; }
  & > span:first-child { background: #efefef; }
  &:last-child { border-bottom: 0; }
`;
const PaneSplit = styled.div`
  flex: none;
  width: 6px;
  background: #f2f2f2;
  box-shadow: 0 0 3px #999;
  z-index: 1;
`;
const ChartPane = styled.div`
  flex: 472 1 0;
  min-width: 0;
  display: flex;
  flex-direction: column;
`;
const ChartMain = styled.div`
  flex: 1;
  min-height: 0;
  display: flex;
`;
const ChartView = styled.div`
  flex: 1;
  min-width: 0;
  display: flex;
  flex-direction: column;
  overflow: hidden;
`;
const Weeks = styled.div`
  flex: none;
  display: flex;
  height: 27px;
  margin-left: -90px;
  background: #ededed;
  border-bottom: 1px solid #b7b7b7;
`;
const Week = styled.div`
  flex: none;
  width: 375px;
  border-right: 1px solid #aaa;
  line-height: 26px;
  text-align: center;
  white-space: nowrap;
`;
const Days = styled.div`
  flex: none;
  display: grid;
  grid-template-columns: 17px 54px 53px 54px 54px 53px 54px 53px 54px;
  grid-auto-columns: 54px;
  grid-auto-flow: column;
  height: 26px;
  border-bottom: 3px solid #bababa;
  background: #ededed;
  font-size: 15px;
  line-height: 23px;
  text-align: center;
`;
const Day = styled.span<{ $off?: boolean }>`
  border-right: 1px solid #aaa;
  ${(p) => p.$off && 'background: #f2d8cc;'}
`;
const Lanes = styled.div`
  flex: 1;
  min-height: 0;
  display: grid;
  grid-auto-rows: 1fr;
  background: linear-gradient(#fffaf2, #fffaf2) 232px 0 / 107px 100% no-repeat;
`;
const Lane = styled.div`
  display: flex;
  align-items: center;
  border-bottom: 1px solid #e9e9e9;
  background: repeating-linear-gradient(#d9d9d9 0 2px, transparent 2px 4px) 284px 0 / 2px 100% no-repeat;
`;
const LaneBar = styled.div`
  flex: 1;
  height: 25px;
  margin-bottom: 4px;
  background: #ededed;
`;
const TaskBar = styled.div`
  width: 54px;
  height: 25px;
  margin: 0 25px 0 72px;
  border-radius: 2px;
  background: #ededed;
`;
const BarName = styled.span`
  color: #999;
  font-size: 15px;
`;

function GanttEditor() {
  return (
    <Gantt>
      <GanttTools>
        <SaveGreen>Save</SaveGreen>
        {toolGroups.map((g, i) => (
          <ToolGroup key={i} $end={groupEnd(g)}>{g.map(([name, icon]) => <Tool key={name} aria-label={name}>{icon}</Tool>)}</ToolGroup>
        ))}
        <Tool aria-label="Highlight">
          <svg width="26" height="26" viewBox="0 0 26 26" {...k}>
            <circle cx="13" cy="13" r="7.5" />
            <path d="M13 0v3M13 23v3M0 13h3M23 13h3M4 4l2 2M20 20l2 2M22 4l-2 2M4 22l2-2" />
          </svg>
        </Tool>
      </GanttTools>
      <GanttPanes>
        <GridPane>
          <GridTable>
            <colgroup><col style={{ width: 45 }} /><col style={{ width: 30 }} /><col style={{ width: 125 }} /><col /></colgroup>
            <thead>
              <tr><th colSpan={2} aria-label="Row" /><th><Clip>code/short name</Clip></th><th><Clip>name</Clip></th></tr>
            </thead>
            <tbody>
              {[['2', '22222'], ['3', '3333']].map(([n, name]) => (
                <tr key={n}>
                  <td><RowNumber>{n}<Pencil size={17} strokeWidth={1.2} /></RowNumber></td>
                  <td><Tick type="checkbox" aria-label={`Select row ${n}`} /></td>
                  <td><Clip $faint>code/short name</Clip></td>
                  <td><TaskTitle>{name}</TaskTitle></td>
                </tr>
              ))}
            </tbody>
          </GridTable>
          <EmptyRows>
            {Array.from({ length: 9 }, (_, i) => <EmptyRow key={i}><span /><span /><span /><span /></EmptyRow>)}
          </EmptyRows>
          <ScrollBar before={0} thumb={96} after={346} startColor="#a3a3a3" />
        </GridPane>
        <PaneSplit />
        <ChartPane>
          <ChartMain>
            <ChartView>
              <Weeks><Week>Aug 21 - Aug 27 '22 (w.34)</Week><Week>Aug 28 - Sep 3 '22 (w.35)</Week></Weeks>
              <Days>
                <Day />
                {['T', 'W', 'T', 'F', 'S', 'S', 'M', 'T', ''].map((d, i) => <Day key={i} $off={d === 'S'}>{d}</Day>)}
              </Days>
              <Lanes>
                {Array.from({ length: 11 }, (_, i) => (
                  <Lane key={i}>
                    {i === 0 && <LaneBar />}
                    {i === 1 && <><TaskBar /><BarName>3333</BarName></>}
                  </Lane>
                ))}
              </Lanes>
            </ChartView>
            <ScrollBar vertical before={0} thumb={165} after={254} startColor="#a3a3a3" />
          </ChartMain>
          <BarLine>
            <ScrollBar before={247} thumb={70} after={91} />
            <BarCorner />
          </BarLine>
        </ChartPane>
      </GanttPanes>
    </Gantt>
  );
}

const Footer = styled.div`
  display: flex;
  justify-content: space-between;
  padding: 65px 10px 0 20px;
`;

/* ---------- utilities column ---------- */

const Utilities = styled.aside`
  flex: none;
  width: 90px;
  padding: 35px 20px 0 10px;
`;
const Collapse = styled.button`
  display: block;
  height: 20px;
  margin: 0 3px 35px auto;
`;
const UtilCard = styled.div`
  display: flex;
  flex-direction: column;
  align-items: center;
  gap: 30px;
  padding: 25px 0 23px;
  border-radius: 10px;
  background: #fff;
`;
const Util = styled.button`
  display: flex;
  flex-direction: column;
  align-items: center;
  gap: 6px;
  height: 55px;
`;
const Count = styled.span`
  width: 23px;
  border-radius: 12px;
  background: #e8edf1;
  color: #666;
  font-size: 15px;
  font-weight: 600;
  line-height: 25px;
`;
const u = { width: 24, height: 24, viewBox: '0 0 24 24', fill: 'none', stroke: '#444', strokeWidth: 1.2 };
const utilItems: [string, React.ReactNode][] = [
  ['Attachments', <svg {...u}><path d="m16 6-8 11a2 2 0 0 0 3 2l9-11a4 4 0 0 0-6-6L5 14a5 5 0 0 0 7 7l8-10" /></svg>],
  ['Followers', (
    <svg {...u}>
      <circle cx="6" cy="3" r="2.5" /><circle cx="18" cy="3" r="2.5" /><circle cx="12" cy="4" r="2.5" />
      <path d="M8 8c-5-2-7 1-6 8l2 1v5h4M16 8c5-2 7 1 6 8l-2 1v5h-4M9 8h6l2 8-2 2v6H9v-6l-2-2z" />
    </svg>
  )],
  ['Stakeholders', (
    <svg {...u}>
      <path d="M4 23h16v-3H4zM6 19l3-6C4 11 4 3 11 2l3-1v3c3 1 6 4 6 6l-3 2-4-2c0 4 4 4 5 9z" />
    </svg>
  )],
  ['Tags', <svg {...u}><path d="M5 8l7-7 7 7v15H5z" /><circle cx="12" cy="8" r="2" /></svg>],
];

/* ---------- status bar ---------- */

const StatusBar = styled.footer`
  position: relative;
  flex: none;
  display: flex;
  align-items: center;
  justify-content: space-between;
  height: 36px;
  padding: 0 15px 0 20px;
  background: #2f3040;
  color: #d6d6da;
  font-size: 18px;
`;
const StatusGroup = styled.div<{ $gap: number }>`
  display: flex;
  align-items: center;
  gap: ${(p) => p.$gap}px;
`;
const StatusItem = styled.a`
  display: flex;
  align-items: center;
  gap: 5px;
`;
const Brand = styled.strong`
  color: #fff;
`;
const Watermark = styled.span`
  position: absolute;
  right: 15px;
  top: 4px;
  color: #c9c9c9b0;
  font-size: 20px;
  line-height: 26px;
  text-shadow: 1px 1px 1px #222;
`;
const s = { fill: 'none', stroke: '#d0d0d5', strokeWidth: 1.4 };
const leftStatus: [string, React.ReactNode][] = [
  ['Agile Workbench', <svg width="17" height="20" viewBox="0 0 17 20" {...s}><path d="M6 1h9l-3 7h4L4 19l3-9H1z" /></svg>],
  ['Current work', <svg width="18" height="21" viewBox="0 0 18 21" {...s}><path d="M2 3h14v17H2zM5 1v4M9 1v4M13 1v4M5 9h8M5 12h8M5 15h8" /></svg>],
  ['Scenario Testing', <svg width="18" height="21" viewBox="0 0 18 21" {...s}><path d="M5 1h8M7 1v8L1 20h16L11 9V1M4 15h10" /></svg>],
];
const rightStatus: [string, React.ReactNode][] = [
  ['Issues', <svg width="20" height="19" viewBox="0 0 20 19" {...s}><path d="M10 1 1 18h18zM10 7v6M10 14v2" /></svg>],
  ['Tracer', <svg width="21" height="19" viewBox="0 0 21 19" {...s}><circle cx="4" cy="4" r="3" /><circle cx="5" cy="15" r="3" /><circle cx="17" cy="10" r="3" /><path d="m7 5 7 4M8 14l6-3" /></svg>],
  ['Clipboard', <svg width="18" height="22" viewBox="0 0 18 22" {...s}><path d="M5 3H1v18h16V3h-4M5 5l1-3h6l1 3z" /></svg>],
  ['Live UI', <svg width="20" height="18" viewBox="0 0 20 18" {...s}><path d="M2 9V1h17v14h-9M8 8l-6 8M8 8l-1 5M8 8l-5 2" /></svg>],
  ['Live Data', <svg width="21" height="18" viewBox="0 0 21 18" {...s}><circle cx="5" cy="12" r="4" /><circle cx="16" cy="12" r="4" /><path d="M9 12h3M1 11 5 1M20 11 17 1" /></svg>],
  ['Accessibility', <svg width="18" height="21" viewBox="0 0 18 21" {...s}><circle cx="8" cy="3" r="2" /><path d="M8 5v8h5l3 6h2M8 8h5M5 9a5 5 0 1 0 7 8" /></svg>],
  ['Performance', <svg width="21" height="21" viewBox="0 0 21 21" {...s}><circle cx="10.5" cy="10.5" r="9" /><path d="m9 13 6-7M5 10a6 6 0 0 1 6-5M5 15h11" /></svg>],
];

export default function App() {
  return (
    <Page>
      <Global />
      <BrowserChrome />
      <StudioHeader />
      <Body>
        <LeftRail />
        <ExplorerTree />
        <Splitter>
          <svg width="8" height="8"><path d="M0 1h8M0 6h8" stroke="#8d8d8d" strokeWidth="2" /></svg>
        </Splitter>
        <Workspace>
          <Tabs>
            {tabItems.map((t, i) => (
              <Tab key={i} $active={t.active} $short={t.short}>{t.icon && <CaseIcon />}{t.t}</Tab>
            ))}
            <TabsMenu aria-label="All tabs"><ChevronDown size={20} strokeWidth={1.8} /></TabsMenu>
          </Tabs>
          <WorkArea>
            <CaseSummary />
            <FormColumn>
              <FormMain>
                <FormView>
                  <Card>
                    <FormBody>
                      <FieldLabel htmlFor="text-input">Text Input</FieldLabel>
                      <TextBox id="text-input" />
                      <TaskTable />
                      <GanttCaption>Text Input</GanttCaption>
                      <GanttEditor />
                    </FormBody>
                    <Footer><Pill>Cancel</Pill><Pill $solid>Create</Pill></Footer>
                  </Card>
                </FormView>
                <ScrollBar vertical before={0} thumb={1098} after={30} startColor="#a3a3a3" />
              </FormMain>
              <BarLine>
                <ScrollBar before={0} thumb={1028} after={10} startColor="#a3a3a3" />
                <BarCorner />
              </BarLine>
            </FormColumn>
            <Utilities>
              <Collapse aria-label="Collapse utilities">
                <svg width="21" height="20" fill="none" stroke="#666" strokeWidth="1.5"><path d="M0 10h16M6 4l-6 6 6 6M20 0v20" /></svg>
              </Collapse>
              <UtilCard>
                {utilItems.map(([name, icon]) => <Util key={name} aria-label={name}>{icon}<Count>0</Count></Util>)}
              </UtilCard>
            </Utilities>
            <ScrollBar vertical size={18} before={0} thumb={1052} after={96} startColor="#a3a3a3" />
          </WorkArea>
        </Workspace>
      </Body>
      <StatusBar>
        <StatusGroup $gap={35}>
          {leftStatus.map(([t, icon]) => <StatusItem key={t} href="#status">{icon}{t}</StatusItem>)}
        </StatusGroup>
        <StatusGroup $gap={34}>
          {rightStatus.map(([t, icon]) => <StatusItem key={t} href="#status">{icon}{t}</StatusItem>)}
          <Brand>PEGA</Brand>
        </StatusGroup>
        <Watermark>CSDN @繁华尽头满是殇</Watermark>
      </StatusBar>
    </Page>
  );
}
